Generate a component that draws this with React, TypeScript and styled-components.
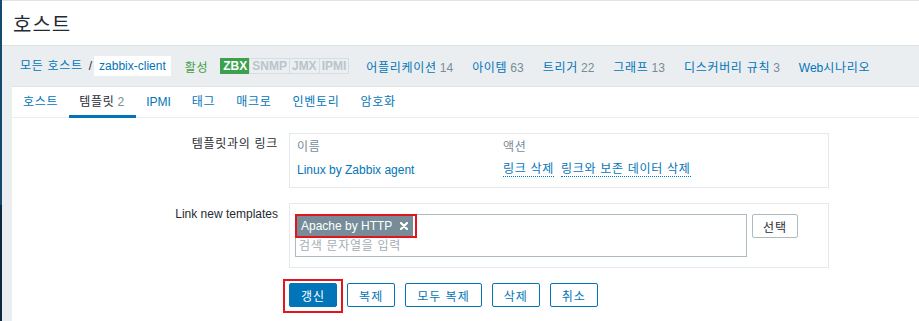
import React from "react";
import styled, { createGlobalStyle, css } from "styled-components";

const GlobalStyle = createGlobalStyle`
  html, body { margin: 0; padding: 0; background: #ebeef0; }
  body {
    font-family: "Liberation Sans", Arial, "Noto Sans CJK KR", sans-serif;
    font-size: 12px;
    letter-spacing: 0.7px;
    color: #1f2c33;
  }
  * { box-sizing: border-box; }
  button { letter-spacing: 1px; }
`;

const BLUE = "#0275b8";
const GREY_TEXT = "#768d99";
const RED = "#e4141b";

const Latin = styled.span`
  letter-spacing: 0;
`;

const Page = styled.div`
  display: flex;
  width: 919px;
  height: 321px;
  overflow: hidden;
`;

const SideEdge = styled.div`
  flex: none;
  width: 2px;
  background: linear-gradient(#15496d 0, #15496d 205px, #0c2940 205px);
`;

const Main = styled.div`
  flex: 1;
  min-width: 0;
  display: flex;
  flex-direction: column;
  background: #ebeef0;
`;

const Header = styled.header`
  height: 46px;
  flex: none;
  background: #fff;
  border-top: 1px solid #dfe4e7;
  border-bottom: 1px solid #dfe4e7;
  display: flex;
  align-items: center;
  padding: 3px 0 0 11px;
`;

const Title = styled.h1`
  margin: 0;
  font-size: 20px;
  font-weight: normal;
  line-height: 24px;
  letter-spacing: 1px;
  color: #1f2c33;
`;

const NavBar = styled.nav`
  height: 40px;
  flex: none;
  display: flex;
  align-items: center;
  padding-left: 18px;
  white-space: nowrap;
`;

const Link = styled.span`
  color: ${BLUE};
  line-height: 14px;
`;

const Slash = styled.span`
  margin: 0 2px 0 6px;
  color: #1f2c33;
  letter-spacing: 0;
`;

const CurrentHost = styled.span`
  display: inline-flex;
  align-items: center;
  height: 20px;
  padding: 0 5px;
  background: #fff;
  color: ${BLUE};
  letter-spacing: 0;
`;

const StatusText = styled.span`
  margin-left: 14px;
  color: #429e47;
`;

const Badges = styled.span`
  display: inline-flex;
  margin-left: 12px;
  margin-right: -2px;
  letter-spacing: 0;
`;

const Badge = styled.span<{ $on?: boolean }>`
  display: inline-flex;
  align-items: center;
  height: 16px;
  padding: 0 2px;
  font-weight: bold;
  font-size: 12px;
  border: 1px solid ${(p) => (p.$on ? "#429e47" : "#d6dde1")};
  background: ${(p) => (p.$on ? "#3aa24f" : "#eceff1")};
  color: ${(p) => (p.$on ? "#fff" : "#b9c5cb")};
  & + & { margin-left: -1px; }
`;

const NavItem = styled.span`
  margin-left: 19px;
  color: ${BLUE};
`;

const Count = styled.span`
  color: ${GREY_TEXT};
  margin-left: 3px;
  letter-spacing: 0;
`;

const Panel = styled.section`
  flex: 1;
  margin-left: 10px;
  background: #fff;
  border-top: 1px solid #dfe4e7;
  display: flex;
  flex-direction: column;
`;

const Tabs = styled.div`
  display: flex;
  height: 31px;
  padding-left: 0.5px;
  border-bottom: 1px solid #ebeef0;
`;

const Tab = styled.span<{ $active?: boolean }>`
  height: 30px;
  line-height: 30px;
  padding: 0 10.5px;
  color: ${(p) => (p.$active ? "#1f2c33" : BLUE)};
  ${(p) =>
    p.$active &&
    css`
      box-shadow: inset 0 -3px 0 ${BLUE};
      height: 31px;
      padding-right: 11.5px;
    `}
`;

const Form = styled.div`
  display: grid;
  grid-template-columns: 266px 540px;
  column-gap: 11px;
  row-gap: 15px;
  padding-top: 15px;
`;

const Label = styled.div`
  text-align: right;
  padding-top: 4px;
  line-height: 14px;
`;

const FieldBox = styled.div<{ $pad: string }>`
  width: 540px;
  border: 1px solid #e5e9ec;
  padding: ${(p) => p.$pad};
`;

const LinkTable = styled.div`
  display: grid;
  grid-template-columns: 206px 1fr;
`;

const HeadCell = styled.div`
  color: ${GREY_TEXT};
  line-height: 22px;
  height: 22px;
`;

const Cell = styled.div`
  height: 23px;
  display: flex;
  align-items: center;
  gap: 7px;
  color: ${BLUE};
`;

const ActionLink = styled.span`
  display: inline-block;
  line-height: 14px;
  color: ${BLUE};
  border-bottom: 1px dotted ${BLUE};
`;

const SelectRow = styled.div`
  display: flex;
  align-items: flex-start;
  gap: 5px;
`;

const MultiSelect = styled.div`
  width: 452px;
  height: 43px;
  border: 1px solid #acbbc2;
  padding: 1px;
  display: flex;
  flex-direction: column;
  align-items: flex-start;
`;

const Tag = styled.span`
  position: relative;
  display: inline-flex;
  align-items: center;
  gap: 8px;
  height: 20px;
  padding: 0 5px 0 4px;
  background: #768d99;
  color: #fff;
  letter-spacing: 0;
  &::after {
    content: "";
    position: absolute;
    top: -2px;
    left: -2px;
    right: -4px;
    bottom: -2px;
    border: 2px solid ${RED};
    pointer-events: none;
  }
`;

const Placeholder = styled.span`
  line-height: 16px;
  padding: 2px 0 0 2px;
  color: #a3adb3;
`;

const GreyButton = styled.button`
  height: 24px;
  padding: 0 10px;
  border: 1px solid #acbbc2;
  border-radius: 2px;
  background: #fff;
  color: #1f2c33;
  font-family: inherit;
  font-size: 12px;
`;

const ButtonRow = styled.div`
  grid-column: 2;
  display: flex;
  gap: 10px;
`;

const Button = styled.button<{ $primary?: boolean; $marked?: boolean }>`
  position: relative;
  height: 24px;
  padding: 0 11px;
  border: 1px solid ${BLUE};
  border-radius: 2px;
  font-family: inherit;
  font-size: 12px;
  background: ${(p) => (p.$primary ? BLUE : "#fff")};
  color: ${(p) => (p.$primary ? "#fff" : BLUE)};
  ${(p) =>
    p.$marked &&
    css`
      &::after {
        content: "";
        position: absolute;
        top: -5px;
        left: -7px;
        right: -7px;
        bottom: -7px;
        border: 2px solid ${RED};
        pointer-events: none;
      }
    `}
`;

const RemoveIcon = () => (
  <svg width="8" height="8" viewBox="0 0 8 8" aria-hidden="true">
    <path d="M1 1 L7 7 M7 1 L1 7" stroke="#fff" strokeWidth="2.2" strokeLinecap="round" />
  </svg>
);

const navItems: [React.ReactNode, string | null, string][] = [
  ["어플리케이션", "14", "apps"],
  ["아이템", "63", "items"],
  ["트리거", "22", "triggers"],
  ["그래프", "13", "graphs"],
  ["디스커버리 규칙", "3", "lld"],
  [
    <>
      <Latin>Web</Latin>시나리오
    </>,
    null,
    "web",
  ],
];

export default function App() {
  return (
    <>
      <GlobalStyle />
      <Page>
        <SideEdge />
        <Main>
          <Header>
            <Title>호스트</Title>
          </Header>
          <NavBar>
            <Link>모든 호스트</Link>
            <Slash>/</Slash>
            <CurrentHost>zabbix-client</CurrentHost>
            <StatusText>활성</StatusText>
            <Badges>
              <Badge $on>ZBX</Badge>
              <Badge>SNMP</Badge>
              <Badge>JMX</Badge>
              <Badge>IPMI</Badge>
            </Badges>
            {navItems.map(([name, count, key]) => (
              <NavItem key={key}>
                {name}
                {count && <Count>{count}</Count>}
              </NavItem>
            ))}
          </NavBar>
          <Panel>
            <Tabs>
              <Tab>호스트</Tab>
              <Tab $active>
                템플릿<Count>2</Count>
              </Tab>
              <Tab>
                <Latin>IPMI</Latin>
              </Tab>
              <Tab>태그</Tab>
              <Tab>매크로</Tab>
              <Tab>인벤토리</Tab>
              <Tab>암호화</Tab>
            </Tabs>
            <Form>
              <Label>템플릿과의 링크</Label>
              <FieldBox $pad="2px 7px 6px">
                <LinkTable>
                  <HeadCell>이름</HeadCell>
                  <HeadCell>액션</HeadCell>
                  <Cell>
                    <Latin>Linux by Zabbix agent</Latin>
                  </Cell>
                  <Cell>
                    <ActionLink>링크 삭제</ActionLink>
                    <ActionLink>링크와 보존 데이터 삭제</ActionLink>
                  </Cell>
                </LinkTable>
              </FieldBox>
              <Label>
                <Latin>Link new templates</Latin>
              </Label>
              <FieldBox $pad="10px 5px">
                <SelectRow>
                  <MultiSelect>
                    <Tag>
                      Apache by HTTP
                      <RemoveIcon />
                    </Tag>
                    <Placeholder>검색 문자열을 입력</Placeholder>
                  </MultiSelect>
                  <GreyButton>선택</GreyButton>
                </SelectRow>
              </FieldBox>
              <ButtonRow>
                <Button $primary $marked>갱신</Button>
                <Button>복제</Button>
                <Button>모두 복제</Button>
                <Button>삭제</Button>
                <Button>취소</Button>
              </ButtonRow>
            </Form>
          </Panel>
        </Main>
      </Page>
    </>
  );
}
